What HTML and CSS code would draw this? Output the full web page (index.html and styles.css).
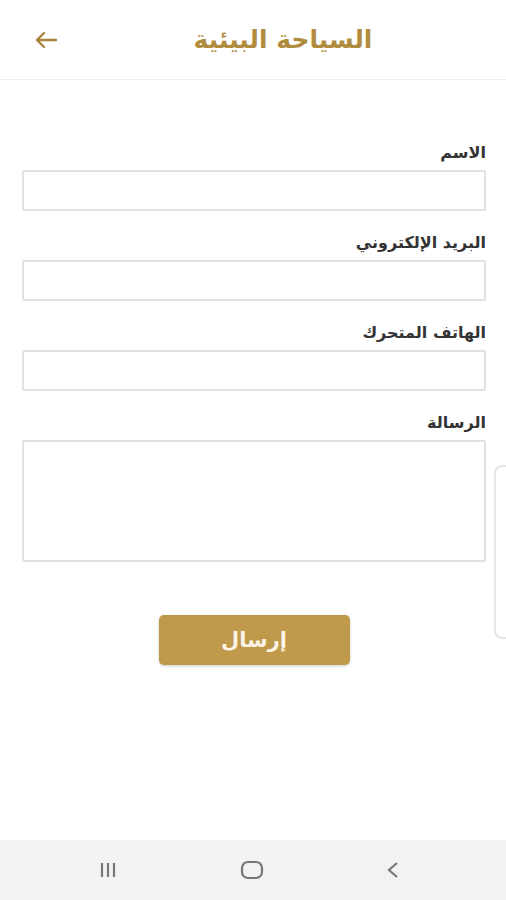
FILE: index.html
```html
<!DOCTYPE html>
<html lang="ar">
<head>
    <meta charset="UTF-8">
    <meta name="viewport" content="width=device-width, initial-scale=1.0">
    <title>السياحة البيئية</title>
    <link rel="stylesheet" href="styles.css">
</head>
<body>
    <div class="screen">
        <header class="top-bar">
            <button class="back-button" aria-label="رجوع">
                <svg width="24" height="18" viewBox="0 0 24 18">
                    <path d="M22 9H3M10 2L3 9l7 7" fill="none" stroke="#a8843a" stroke-width="2.4" stroke-linecap="round" stroke-linejoin="round"/>
                </svg>
            </button>
            <h1 class="title">السياحة البيئية</h1>
        </header>

        <!-- Contact form -->
        <form class="contact-form" dir="rtl">
            <div class="field">
                <label for="name">الاسم</label>
                <input type="text" id="name">
            </div>
            <div class="field">
                <label for="email">البريد الإلكتروني</label>
                <input type="email" id="email">
            </div>
            <div class="field">
                <label for="phone">الهاتف المتحرك</label>
                <input type="tel" id="phone">
            </div>
            <div class="field">
                <label for="message">الرسالة</label>
                <textarea id="message"></textarea>
            </div>
            <div class="actions">
                <button type="button" class="send-button">إرسال</button>
            </div>
        </form>

        <div class="scroll-hint"></div>

        <!-- Android navigation bar -->
        <nav class="nav-bar">
            <svg width="20" height="20" viewBox="0 0 20 20">
                <path d="M4 3v14M10 3v14M16 3v14" stroke="#777" stroke-width="2.2"/>
            </svg>
            <svg width="24" height="22" viewBox="0 0 24 22">
                <rect x="2" y="3" width="20" height="16" rx="6" fill="none" stroke="#777" stroke-width="2.2"/>
            </svg>
            <svg width="14" height="20" viewBox="0 0 14 20">
                <path d="M11 3L3 10l8 7" fill="none" stroke="#777" stroke-width="2.2"/>
            </svg>
        </nav>
    </div>
</body>
</html>
```

FILE: styles.css
```css
/* Basic page styles */
body {
    margin: 0;
    background: #ffffff;
    font-family: "DejaVu Sans", "Noto Sans", sans-serif;
}

.screen {
    position: relative;
    height: 900px;
    display: flex;
    flex-direction: column;
    overflow: hidden;
}

/* Header */
.top-bar {
    height: 80px;
    display: flex;
    align-items: center;
    padding: 0 22px 0 34px;
    border-bottom: 1px solid #eeeeee;
    box-sizing: border-box;
}

.back-button {
    width: 28px;
    height: 28px;
    padding: 0;
    border: none;
    background: none;
    display: flex;
    align-items: center;
}

.title {
    flex: 1;
    margin: 0 0 0 20px;
    text-align: center;
    font-size: 25px;
    font-weight: bold;
    color: #b08d3e;
}

/* Form */
.contact-form {
    display: flex;
    flex-direction: column;
    padding: 63px 20px 0 22px;
}

.field {
    display: flex;
    flex-direction: column;
    margin-bottom: 22px;
}

.field label {
    font-size: 16px;
    font-weight: bold;
    color: #333333;
    line-height: 20px;
    margin-bottom: 7px;
}

.field input,
.field textarea {
    height: 41px;
    box-sizing: border-box;
    border: 2px solid #e2e2e2;
    border-radius: 2px;
    background: #ffffff;
    font-family: inherit;
}

.field textarea {
    height: 122px;
    resize: none;
}

.actions {
    display: flex;
    justify-content: center;
    margin-top: 31px;
}

.send-button {
    width: 191px;
    height: 50px;
    border: none;
    border-radius: 5px;
    background: #bf9a4b;
    color: #fbf4e6;
    font-family: inherit;
    font-size: 21px;
    font-weight: bold;
    box-shadow: 0 1px 3px rgba(0, 0, 0, 0.2);
}

/* Scroll hint on the right edge */
.scroll-hint {
    position: absolute;
    top: 465px;
    right: -10px;
    width: 18px;
    height: 170px;
    border: 2px solid #e6e6e6;
    border-radius: 8px;
}

/* Navigation bar */
.nav-bar {
    margin-top: auto;
    height: 60px;
    background: #f2f2f2;
    display: flex;
    align-items: center;
    justify-content: space-between;
    padding: 0 106px 0 98px;
}
```
